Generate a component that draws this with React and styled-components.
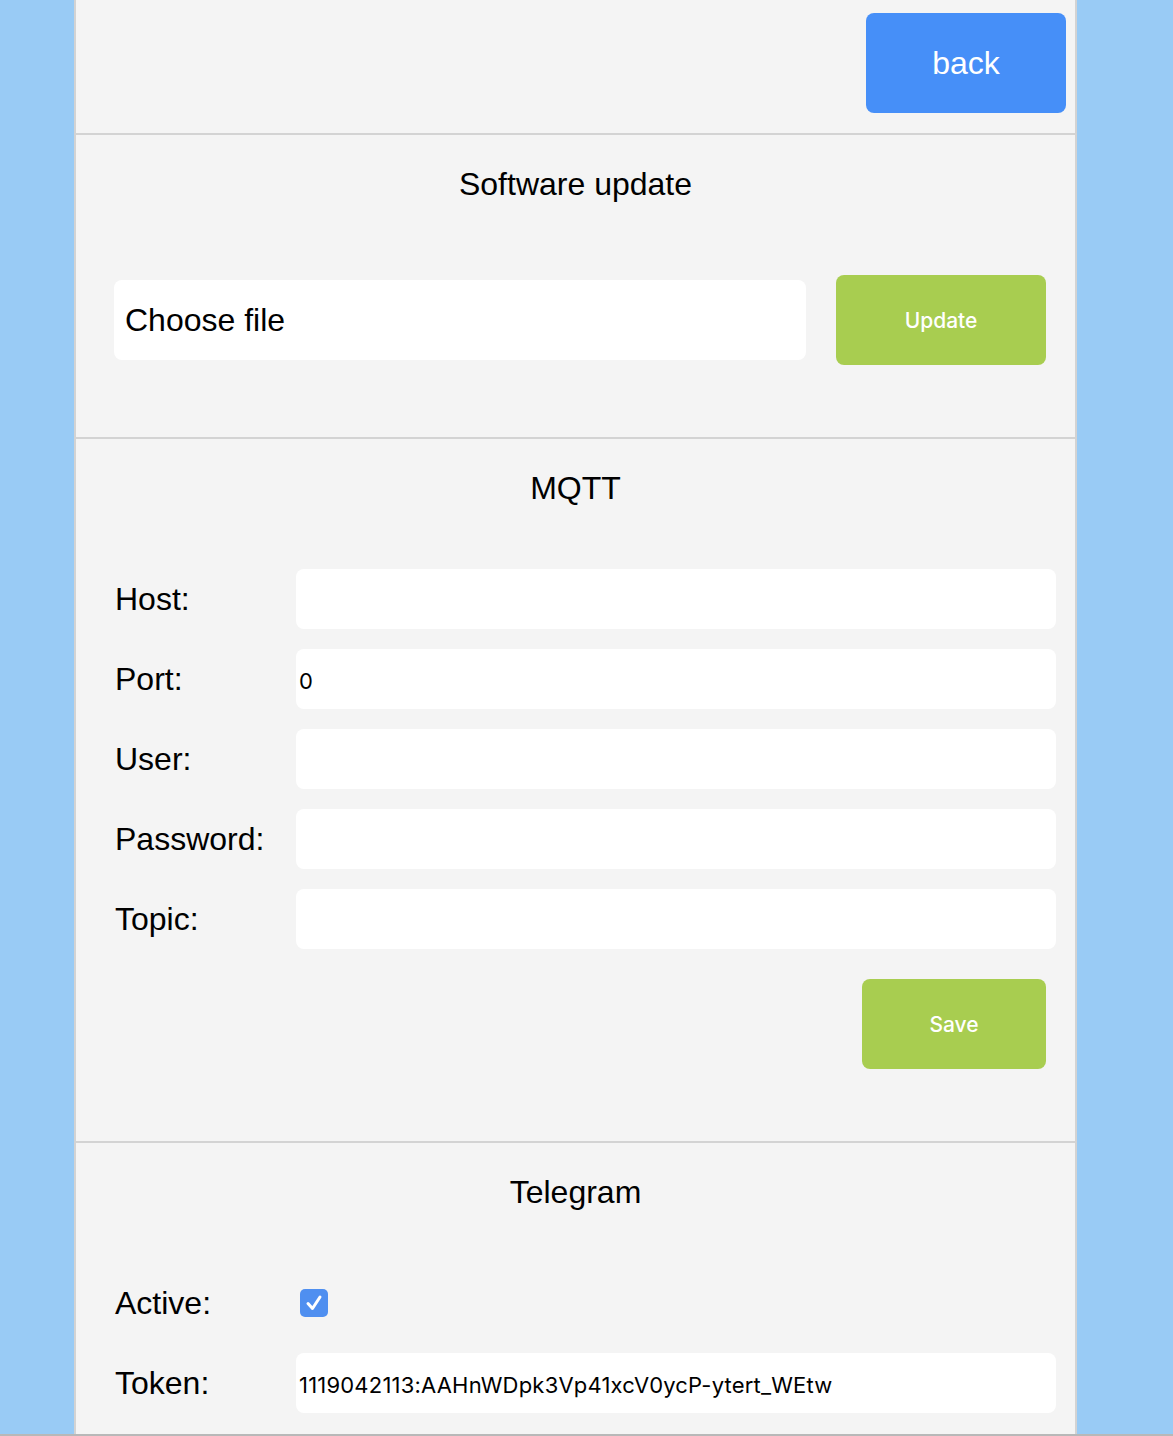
import React from 'react';
import styled, { createGlobalStyle } from 'styled-components';

const GlobalStyle = createGlobalStyle`
  html, body {
    margin: 0;
    padding: 0;
    background: #99cbf5;
  }
  body {
    font-family: "Liberation Sans", Arial, sans-serif;
    color: #000;
  }
`;

const Page = styled.div`
  height: 1434px;
  border-bottom: 2px solid #b8b8b8;
  overflow: hidden;
`;

const Panel = styled.div`
  box-sizing: border-box;
  width: 1003px;
  min-height: 100%;
  margin-left: 74px;
  background: #f4f4f4;
  border-left: 2px solid #d3d3d3;
  border-right: 2px solid #d3d3d3;
`;

const Header = styled.div`
  display: flex;
  justify-content: flex-end;
  padding: 13px 9px 20px 0;
  border-bottom: 2px solid #d3d3d3;
`;

const Button = styled.button`
  box-sizing: border-box;
  width: ${props => props.w}px;
  height: ${props => props.h}px;
  border: none;
  border-radius: 8px;
  background: ${props => props.color};
  color: #fff;
  font-family: ${props => props.big ? '"Liberation Sans", Arial, sans-serif' : 'Inter, "Noto Sans", sans-serif'};
  font-size: ${props => props.big ? 32 : 21}px;
  font-weight: ${props => props.big ? 400 : 500};
  padding: 0;
  cursor: pointer;
`;

const Section = styled.section`
  padding: 30px 19px 72px 39px;
  border-bottom: ${props => props.last ? 'none' : '2px solid #d3d3d3'};
`;

const Title = styled.h2`
  margin: 0 0 ${props => props.gap}px 0;
  padding-right: 20px;
  font-size: 32px;
  line-height: 38px;
  font-weight: 400;
  text-align: center;
`;

const FileRow = styled.div`
  display: flex;
  align-items: center;
  justify-content: space-between;
  margin-left: -1px;
  padding-right: 10px;
`;

const FileBox = styled.div`
  box-sizing: border-box;
  width: 692px;
  height: 80px;
  background: #fff;
  border-radius: 8px;
  display: flex;
  align-items: center;
  padding-left: 11px;
  font-size: 32px;
`;

const Fields = styled.div`
  display: flex;
  flex-direction: column;
  gap: 20px;
`;

const Row = styled.div`
  display: flex;
  align-items: center;
  height: 60px;
`;

const Label = styled.label`
  width: 181px;
  font-size: 32px;
  line-height: 36px;
`;

const Input = styled.input`
  box-sizing: border-box;
  flex: 1;
  height: 60px;
  border: none;
  border-radius: 8px;
  background: #fff;
  padding: 4px 3px 0;
  font-family: Inter, "Noto Sans", sans-serif;
  font-size: 22px;
  letter-spacing: 0.2px;
  color: #000;
  outline: none;
`;

const Check = styled.span`
  display: inline-flex;
  align-items: center;
  justify-content: center;
  width: 28px;
  height: 28px;
  margin-left: 4px;
  border-radius: 5px;
  background: #4f8ff0;
`;

const Actions = styled.div`
  display: flex;
  justify-content: flex-end;
  padding-top: 30px;
  padding-right: 10px;
`;

const Field = ({ label, value }) => (
  <Row>
    <Label>{label}</Label>
    <Input defaultValue={value} />
  </Row>
);

export default function App() {
  return (
    <>
      <GlobalStyle />
      <Page>
        <Panel>
          <Header>
            <Button big w={200} h={100} color="#468ff8">back</Button>
          </Header>

          <Section>
            <Title gap={72}>Software update</Title>
            <FileRow>
              <FileBox>Choose file</FileBox>
              <Button w={210} h={90} color="#a8cd50">Update</Button>
            </FileRow>
          </Section>

          <Section>
            <Title gap={62}>MQTT</Title>
            <Fields>
              <Field label="Host:" value="" />
              <Field label="Port:" value="0" />
              <Field label="User:" value="" />
              <Field label="Password:" value="" />
              <Field label="Topic:" value="" />
            </Fields>
            <Actions>
              <Button w={184} h={90} color="#a8cd50">Save</Button>
            </Actions>
          </Section>

          <Section last>
            <Title gap={62}>Telegram</Title>
            <Fields>
              <Row>
                <Label>Active:</Label>
                <Check>
                  <svg width="28" height="28" viewBox="0 0 28 28">
                    <path d="M8 14.5 L12.5 19.5 L20 8" fill="none" stroke="#fff" strokeWidth="3" strokeLinecap="round" strokeLinejoin="round" />
                  </svg>
                </Check>
              </Row>
              <Field label="Token:" value="1119042113:AAHnWDpk3Vp41xcV0ycP-ytert_WEtw" />
            </Fields>
          </Section>
        </Panel>
      </Page>
    </>
  );
}
